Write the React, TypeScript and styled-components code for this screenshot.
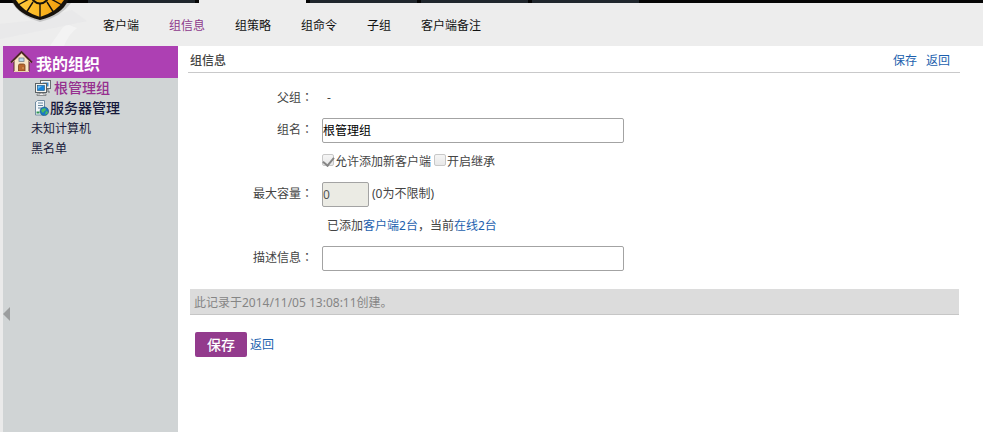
import React from "react";
import styled, { createGlobalStyle, css } from "styled-components";

const GlobalStyle = createGlobalStyle`
  * { box-sizing: border-box; }
  body {
    margin: 0;
    background: #fff;
    color: #444;
    font: 12px/20px "Noto Sans", "Noto Sans CJK SC", sans-serif;
  }
  input, button { font: inherit; }
`;

const Page = styled.div`
  display: flex;
  flex-direction: column;
  min-height: 100vh;
`;

const Header = styled.header`
  position: relative;
  background: #ededed;
`;

const TabStrip = styled.div`
  display: flex;
  gap: 4px;
  height: 3px;
  padding-left: 88px;
  background: #050505;
`;

const Tab = styled.span<{ $active?: boolean }>`
  width: 107px;
  background: ${(p) => (p.$active ? "#ededed" : "#20272d")};
`;

const Emblem = styled.svg`
  position: absolute;
  top: 0;
  left: 0;
`;

const Nav = styled.nav`
  position: relative;
  display: flex;
  align-items: center;
  gap: 30px;
  height: 43px;
  padding: 2px 0 0 103px;
`;

const NavLink = styled.a<{ $active?: boolean }>`
  color: ${(p) => (p.$active ? "#8e3a8c" : "#111")};
  text-decoration: none;
`;

const Body = styled.div`
  display: flex;
  flex: 1;
`;

const Sidebar = styled.aside`
  position: relative;
  flex: none;
  width: 178px;
  border-left: 3px solid #eaeaea;
  background: #d0d4d5;
`;

const SidebarTitle = styled.h1`
  display: flex;
  align-items: center;
  gap: 3px;
  height: 32px;
  margin: 0;
  padding: 4px 0 0 7px;
  background: #ad40b3;
  color: #fff;
  font-size: 16px;
  line-height: 24px;

  svg { margin-top: -6px; }
`;

const Tree = styled.ul`
  margin: 0;
  padding: 0 0 0 28px;
  list-style: none;
`;

const TreeItem = styled.li`
  height: 20px;
`;

type Tone = "active" | "strong" | "plain";

const TreeLink = styled.a<{ $tone: Tone }>`
  display: flex;
  align-items: center;
  color: #17193b;
  text-decoration: none;

  ${(p) =>
    p.$tone === "plain"
      ? css`padding-top: 1px;`
      : css`
          gap: ${p.$tone === "active" ? "3px" : "1px"};
          padding-left: 4px;
          font-size: 14px;
          font-weight: 500;
        `}
  ${(p) => p.$tone === "active" && css`color: #96308f;`}
`;

const Collapse = styled.button`
  position: absolute;
  top: 261px;
  left: 0;
  display: flex;
  padding: 0;
  border: 0;
  background: none;
`;

const Main = styled.main`
  flex: 1;
  min-width: 0;
  padding: 0 23px 24px 10px;
`;

const SectionHead = styled.div`
  display: flex;
  align-items: center;
  justify-content: space-between;
  height: 27px;
  padding: 4px 10px 0 2px;
  border-bottom: 1px solid #c9c9ca;
`;

const SectionTitle = styled.h2`
  margin: 0;
  font-size: 12px;
  font-weight: 500;
`;

const Actions = styled.div`
  display: flex;
  gap: 9px;
`;

const Link = styled.a`
  color: #1c5fae;
  text-decoration: none;
`;

const Form = styled.form`
  padding-top: 9px;
`;

const Row = styled.div`
  display: grid;
  grid-template-columns: 125px minmax(0, 1fr);
  column-gap: 9px;
  align-items: center;
  height: 32px;
`;

const Label = styled.label`
  text-align: right;
`;

const Punctuation = styled.span`
  font-family: "Noto Sans CJK TC", sans-serif;
  line-height: 1;
`;

const Field = styled.div`
  display: flex;
  align-items: center;
  grid-column: 2;
`;

const Note = styled.span`
  padding-left: 5px;
`;

const TextBox = styled.input<{ $short?: boolean }>`
  width: ${(p) => (p.$short ? "47px" : "302px")};
  max-width: 100%;
  height: 25px;
  padding: 0;
  border: 1px solid #a3a3a3;
  border-radius: 2px;
  background: #fff;
  color: #000;

  &:disabled {
    background: #ebebe4;
    color: #555;
  }
`;

const Hint = styled.span`
  padding-left: 3px;
`;

const Choice = styled.label`
  display: flex;
  align-items: center;
  gap: 1px;
  margin-right: 3px;
`;

const CheckBox = styled.input`
  appearance: none;
  display: grid;
  place-items: center;
  width: 12px;
  height: 12px;
  margin: 0 0 4px;
  border: 1px solid #c8c8c8;
  border-radius: 2px;
  background: linear-gradient(#f5f5f5, #e8e8e8);

  &:checked::after {
    content: "";
    width: 5px;
    height: 9px;
    margin-bottom: 2px;
    border: solid #858585;
    border-width: 0 2px 2px 0;
    transform: rotate(40deg);
  }
`;

const RecordBar = styled.p`
  height: 26px;
  margin: 15px 1px 17px 2px;
  padding: 4px 4px 0;
  border-bottom: 1px solid #c6c6c6;
  background: #dcdcdc;
  color: #858585;
`;

const Footer = styled.div`
  display: flex;
  align-items: center;
  gap: 3px;
  padding-left: 7px;
`;

const SaveButton = styled.button`
  width: 52px;
  height: 25px;
  padding: 0;
  border: 0;
  border-radius: 2px;
  background: #933b8d;
  color: #fff;
  font-size: 14px;
  font-weight: 500;
`;

const EmblemMark = () => (
  <Emblem width="200" height="46" viewBox="0 0 200 46" aria-hidden="true">
    <defs>
      <linearGradient id="gold" x1="0" y1="0" x2="1" y2="0">
        <stop offset="0" stopColor="#ffd044" />
        <stop offset="0.5" stopColor="#fbb520" />
        <stop offset="1" stopColor="#f09a0c" />
      </linearGradient>
    </defs>
    <path d="M0 24 37 20 72 10 87 21 0 39Z" fill="#e6e6e7" opacity=".5" />
    <path d="M50 46 61 30Q64 25 69 25L77 28Q68 35 64 46Z" fill="#f3f3f3" />
    <path d="M12 3Q21 17 40 22 61 17 71 3Z" fill="#777" opacity=".3" />
    <path d="M11-2H69Q64 14 40 20 16 14 11-2Z" fill="#17120c" />
    <path d="M15-2H65Q59 11 40 17 21 11 15-2Z" fill="url(#gold)" />
    <circle cx="40" cy="-5" r="8.5" fill="#fbb520" stroke="#17120c" strokeWidth="2" />
    <path d="M40 4V18M33 2 26 13M47 2 54 13M29-1 18 5M51-1 62 5" fill="none" stroke="#17120c" strokeWidth="1.4" />
  </Emblem>
);

const HouseIcon = () => (
  <svg width="23" height="23" viewBox="0 0 23 23" aria-hidden="true">
    <path d="M4 11V21.5H19V11L11.5 3Z" fill="#f8e5c8" stroke="#5c3327" />
    <path d="M1 12.5 11.5 2 22 12.5" fill="none" stroke="#4c2928" strokeWidth="1.8" />
    <path d="M2.5 12.5 11.5 3.5 20.5 12.5" fill="none" stroke="#d9aa8c" strokeWidth=".8" />
    <rect x="9" y="8" width="5" height="3.5" fill="#b9d7ee" stroke="#77818b" strokeWidth=".8" />
    <path d="M8.5 21V15.5Q8.5 14 10 14H13.5Q15 14 15 15.5V21Z" fill="#b96830" stroke="#7a431d" strokeWidth=".8" />
    <path d="M13 17.5v1" stroke="#ffe19a" />
    <path d="M4 21.5H19" stroke="#ead3ad" />
  </svg>
);

const ComputersIcon = () => (
  <svg width="16" height="16" viewBox="0 0 16 16" aria-hidden="true">
    <rect x="5.5" y=".5" width="10" height="8" fill="#f4f4f1" stroke="#686e70" />
    <rect x="7.5" y="2.5" width="6" height="4" fill="#388bd2" />
    <path d="M11 9h2v3h2" fill="none" stroke="#676c6e" />
    <rect x=".5" y="3.5" width="11" height="9" fill="#f5f4ef" stroke="#5b6265" />
    <rect x="2.5" y="5.5" width="7" height="5" fill="#1684dc" stroke="#195681" strokeWidth=".6" />
    <path d="M3 6h4L3 9Z" fill="#66baf1" />
    <path d="M5 13H8V14H11V15.5H2V14H5Z" fill="#eee" stroke="#686c6d" strokeWidth=".7" />
  </svg>
);

const ServerIcon = () => (
  <svg width="14" height="16" viewBox="0 0 14 16" aria-hidden="true">
    <path d="M1.5 1.5 2.5.5H9.5V14L8.5 15H.5V2Z" fill="#f2f7fa" stroke="#718da2" />
    <path d="M3 3H8M3 5.5H8M3 8H7" stroke="#66879f" />
    <path d="M1.5 12.5h3" stroke="#339653" strokeWidth="2" />
    <circle cx="9.3" cy="11.3" r="4.3" fill="#1978c5" stroke="#155478" strokeWidth=".6" />
    <path d="M7 9 10 8 11 10 9 11.5 8 13 6.2 11ZM11 11l2 1-1 2-2 .5Z" fill="#4cbe5c" />
  </svg>
);

const navItems = ["客户端", "组信息", "组策略", "组命令", "子组", "客户端备注"];

const treeItems: { text: string; tone: Tone; icon?: React.ReactNode }[] = [
  { text: "根管理组", tone: "active", icon: <ComputersIcon /> },
  { text: "服务器管理", tone: "strong", icon: <ServerIcon /> },
  { text: "未知计算机", tone: "plain" },
  { text: "黑名单", tone: "plain" },
];

const Colon = () => <Punctuation>：</Punctuation>;

export default function App() {
  return (
    <Page>
      <GlobalStyle />
      <Header>
        <TabStrip>
          <Tab />
          <Tab $active />
          <Tab />
          <Tab />
          <Tab />
        </TabStrip>
        <EmblemMark />
        <Nav>
          {navItems.map((item) => (
            <NavLink key={item} href="#" $active={item === "组信息"}>
              {item}
            </NavLink>
          ))}
        </Nav>
      </Header>
      <Body>
        <Sidebar>
          <SidebarTitle>
            <HouseIcon />
            我的组织
          </SidebarTitle>
          <Tree>
            {treeItems.map(({ text, tone, icon }) => (
              <TreeItem key={text}>
                <TreeLink href="#" $tone={tone}>
                  {icon}
                  {text}
                </TreeLink>
              </TreeItem>
            ))}
          </Tree>
          <Collapse type="button" aria-label="收起侧栏">
            <svg width="7" height="14" viewBox="0 0 7 14" aria-hidden="true">
              <path d="M7 0V14L0 7Z" fill="#9b9d9e" />
            </svg>
          </Collapse>
        </Sidebar>
        <Main>
          <SectionHead>
            <SectionTitle>组信息</SectionTitle>
            <Actions>
              <Link href="#">保存</Link>
              <Link href="#">返回</Link>
            </Actions>
          </SectionHead>
          <Form onSubmit={(e) => e.preventDefault()}>
            <Row>
              <Label as="span">父组<Colon /></Label>
              <Field>
                <Note>-</Note>
              </Field>
            </Row>
            <Row>
              <Label htmlFor="name">组名<Colon /></Label>
              <Field>
                <TextBox id="name" type="text" defaultValue="根管理组" />
              </Field>
            </Row>
            <Row>
              <Field>
                <Choice>
                  <CheckBox type="checkbox" defaultChecked disabled />
                  允许添加新客户端
                </Choice>
                <Choice>
                  <CheckBox type="checkbox" disabled />
                  开启继承
                </Choice>
              </Field>
            </Row>
            <Row>
              <Label htmlFor="capacity">最大容量<Colon /></Label>
              <Field>
                <TextBox id="capacity" type="text" defaultValue="0" disabled $short />
                <Hint>(0为不限制)</Hint>
              </Field>
            </Row>
            <Row>
              <Field>
                <Note>
                  已添加<Link href="#">客户端2台</Link>，当前<Link href="#">在线2台</Link>
                </Note>
              </Field>
            </Row>
            <Row>
              <Label htmlFor="description">描述信息<Colon /></Label>
              <Field>
                <TextBox id="description" type="text" />
              </Field>
            </Row>
            <RecordBar>此记录于2014/11/05 13:08:11创建。</RecordBar>
            <Footer>
              <SaveButton type="submit">保存</SaveButton>
              <Link href="#">返回</Link>
            </Footer>
          </Form>
        </Main>
      </Body>
    </Page>
  );
}
